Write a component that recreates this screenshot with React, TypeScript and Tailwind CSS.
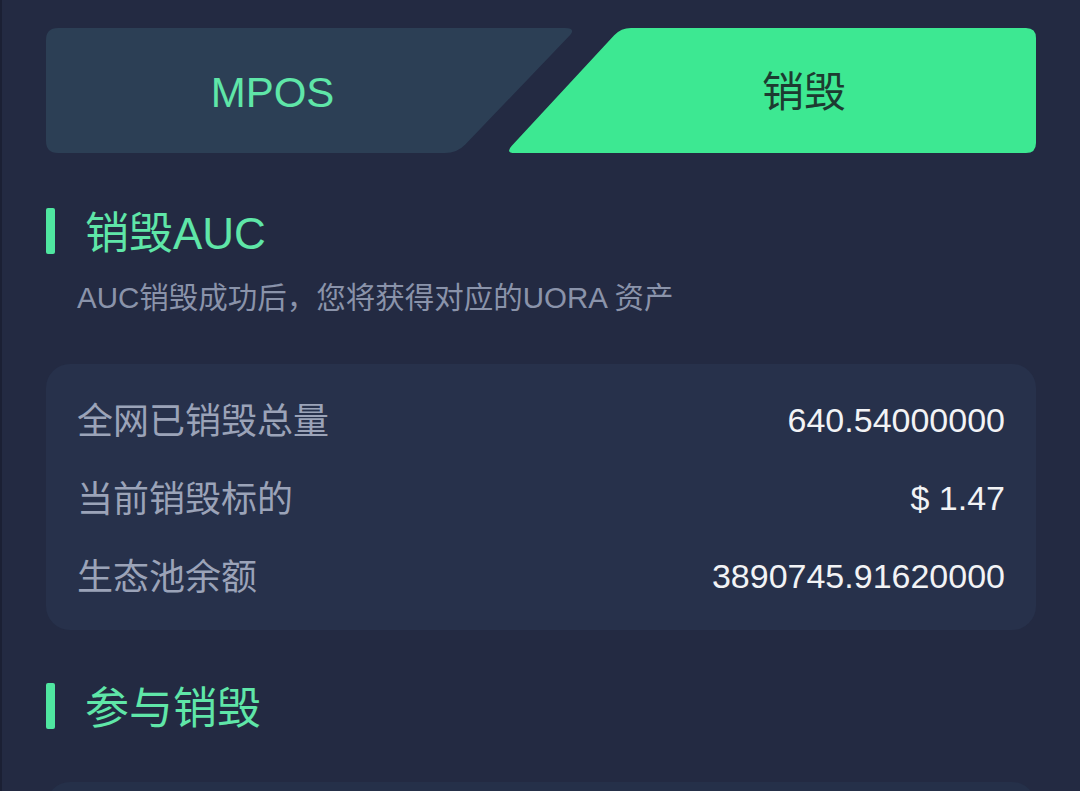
import React from "react";

const rows = [
  { label: "全网已销毁总量", value: "640.54000000" },
  { label: "当前销毁标的", value: "$ 1.47" },
  { label: "生态池余额", value: "3890745.91620000" },
];

function SectionTitle({ text }: { text: string }) {
  return (
    <div className="flex h-[46px] items-center gap-[30px]">
      <span className="h-[46px] w-[9px] rounded-[2px] bg-[#4fe6a0]" />
      <h2 className="pt-[6px] text-[44px] leading-none text-[#5fe6a8]">{text}</h2>
    </div>
  );
}

export default function App() {
  return (
    <main
      className="min-h-[791px] w-[1080px] overflow-hidden border-l-2 border-[#1b2034] bg-[#232a42] px-[44px] pt-[28px]"
      style={{ fontFamily: '"Liberation Sans", "Noto Sans CJK SC", sans-serif' }}
    >
      <div className="flex">
        <button className="flex h-[125px] w-[531px] shrink-0 items-center justify-center bg-[#2c3f55] pr-[78px] pt-[5px] text-[42px] leading-none text-[#5fe6a8] [clip-path:path('M12_0_H519_Q531_0_522.7_8.6_L419.3_116.4_Q411_125_399_125_H12_Q0_125_0_113_V12_Q0_0_12_0_Z')]">
          MPOS
        </button>
        <button className="-ml-[72px] flex h-[125px] w-[531px] shrink-0 items-center justify-center bg-[#3de892] pl-[67px] pt-[5px] text-[42px] leading-none text-[#1d3b31] [clip-path:path('M126_0_H521_Q531_0_531_10_V115_Q531_125_521_125_H10_Q0_125_6.8_117.7_L109.2_7.3_Q116_0_126_0_Z')]">
          销毁
        </button>
      </div>

      <section className="mt-[55px]">
        <SectionTitle text="销毁AUC" />
        <p className="mt-[24px] pl-[31px] text-[29.5px] leading-[40px] text-[#8a93aa]">
          AUC销毁成功后，您将获得对应的UORA 资产
        </p>
      </section>

      <div className="mt-[46px] rounded-[24px] bg-[#27314b] px-[31px] py-4">
        {rows.map((row) => (
          <div key={row.label} className="flex h-[78px] items-center justify-between">
            <span className="pt-[6px] text-[36px] text-[#9ba3b8]">{row.label}</span>
            <span className="pt-[2px] text-[34px] text-[#f2f3f5]">{row.value}</span>
          </div>
        ))}
      </div>

      <section className="mt-[53px]">
        <SectionTitle text="参与销毁" />
      </section>

      <div className="mt-[53px] h-[200px] rounded-[24px] bg-[#253049]" />
    </main>
  );
}
